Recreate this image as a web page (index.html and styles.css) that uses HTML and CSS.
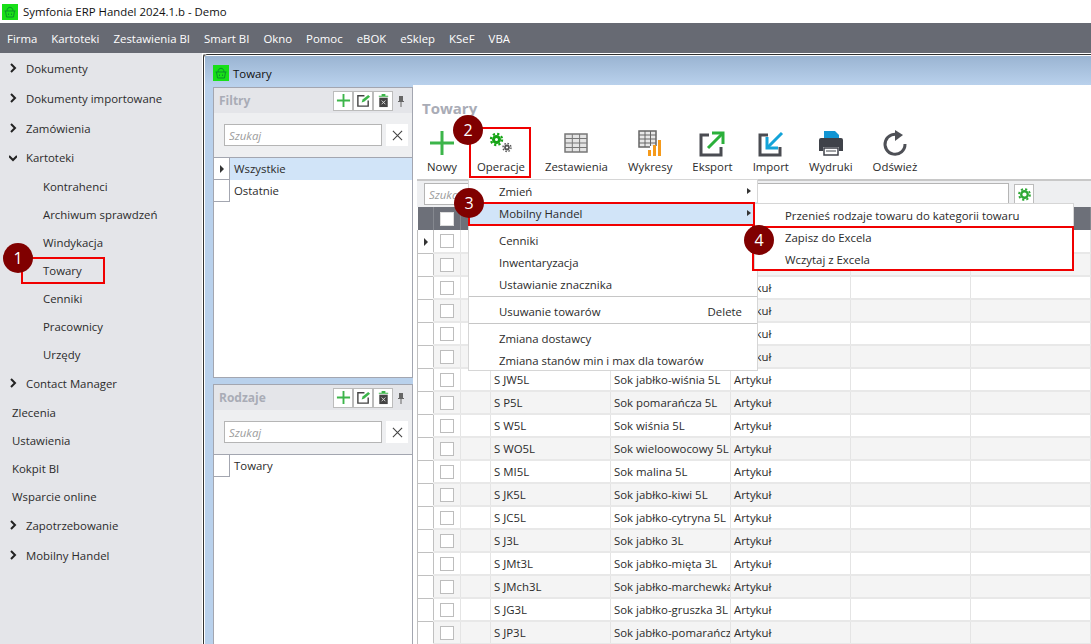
FILE: index.html
```html
<!DOCTYPE html>
<html lang="pl">
<head>
    <meta charset="UTF-8">
    <title>Symfonia ERP Handel 2024.1.b - Demo</title>
    <link rel="stylesheet" href="styles.css">
</head>
<body>

<div class="titlebar">
    <svg class="logo" viewBox="0 0 16 16"><rect width="16" height="16" fill="#18e018"/><path d="M2.500 7h11M3.500 7l1 6h7l1-6M5 7c0-5 6-5 6 0M6.500 9.500v1.500M9.500 9.500v1.500" fill="none" stroke="#0b8f2c" stroke-width="1"/></svg>
    <span>Symfonia ERP Handel 2024.1.b - Demo</span>
</div>

<div class="menubar">
    <span>Firma</span><span>Kartoteki</span><span>Zestawienia BI</span><span>Smart BI</span><span>Okno</span><span>Pomoc</span><span>eBOK</span><span>eSklep</span><span>KSeF</span><span>VBA</span>
</div>

<div class="app">
    <div class="sidebar">
        <div class="nav-item"><svg class="chev" viewBox="0 0 8 10"><path d="M2 1l4 4-4 4" /></svg>Dokumenty</div>
        <div class="nav-item"><svg class="chev" viewBox="0 0 8 10"><path d="M2 1l4 4-4 4" /></svg>Dokumenty importowane</div>
        <div class="nav-item"><svg class="chev" viewBox="0 0 8 10"><path d="M2 1l4 4-4 4" /></svg>Zamówienia</div>
        <div class="nav-item nav-open"><svg class="chev" viewBox="0 0 8 10"><path d="M0 3l4 4 4-4" /></svg>Kartoteki</div>
        <div class="nav-sub">Kontrahenci</div>
        <div class="nav-sub">Archiwum sprawdzeń</div>
        <div class="nav-sub">Windykacja</div>
        <div class="nav-sub">Towary</div>
        <div class="nav-sub">Cenniki</div>
        <div class="nav-sub">Pracownicy</div>
        <div class="nav-sub">Urzędy</div>
        <div class="nav-item"><svg class="chev" viewBox="0 0 8 10"><path d="M2 1l4 4-4 4" /></svg>Contact Manager</div>
        <div class="nav-plain">Zlecenia</div>
        <div class="nav-plain">Ustawienia</div>
        <div class="nav-plain">Kokpit BI</div>
        <div class="nav-plain">Wsparcie online</div>
        <div class="nav-item"><svg class="chev" viewBox="0 0 8 10"><path d="M2 1l4 4-4 4" /></svg>Zapotrzebowanie</div>
        <div class="nav-item"><svg class="chev" viewBox="0 0 8 10"><path d="M2 1l4 4-4 4" /></svg>Mobilny Handel</div>
    </div>

    <div class="workspace">
        <div class="window-title">
            <svg class="logo" viewBox="0 0 16 16"><rect width="16" height="16" fill="#18e018"/><path d="M2.500 7h11M3.500 7l1 6h7l1-6M5 7c0-5 6-5 6 0M6.500 9.500v1.500M9.500 9.500v1.500" fill="none" stroke="#0b8f2c" stroke-width="1"/></svg>
            <span>Towary</span>
        </div>
        <div class="window-body">
            <div class="left-col">
                <div class="panel panel-filters">
                    <div class="panel-head">
                        <span class="panel-name">Filtry</span>
                        <span class="tool"><svg viewBox="0 0 16 16"><path d="M8 1v14M1 8h14" stroke="#3cb54a" stroke-width="2"/></svg></span>
                        <span class="tool"><svg viewBox="0 0 16 16"><path d="M9 3H2v11h11V8" fill="none" stroke="#444" stroke-width="1.500"/><path d="M6 10l1-3 6-5 2 2-6 5z" fill="#3cb54a"/></svg></span>
                        <span class="tool"><svg viewBox="0 0 16 16"><path d="M3 3h10v1H3zM6 1h4v2H6z" fill="#3cb54a"/><path d="M3.500 5h9v10h-9z" fill="#444"/><path d="M6 8l4 4M10 8l-4 4" stroke="#ddd"/></svg></span>
                        <svg class="pin" viewBox="0 0 10 12"><path d="M3 1h4v5h1v1H2V6h1zM4.500 7h1v5h-1z" fill="#666"/></svg>
                    </div>
                    <div class="panel-search">
                        <input class="search" placeholder="Szukaj">
                        <span class="clear"><svg viewBox="0 0 12 12"><path d="M1 1l10 10M11 1L1 11" stroke="#444" stroke-width="1.200"/></svg></span>
                    </div>
                    <div class="list-row selected"><span class="row-mark"><i class="tri"></i></span><span class="list-text">Wszystkie</span></div>
                    <div class="list-row"><span class="row-mark"></span><span class="list-text">Ostatnie</span></div>
                </div>
                <div class="panel panel-kinds">
                    <div class="panel-head">
                        <span class="panel-name">Rodzaje</span>
                        <span class="tool"><svg viewBox="0 0 16 16"><path d="M8 1v14M1 8h14" stroke="#3cb54a" stroke-width="2"/></svg></span>
                        <span class="tool"><svg viewBox="0 0 16 16"><path d="M9 3H2v11h11V8" fill="none" stroke="#444" stroke-width="1.500"/><path d="M6 10l1-3 6-5 2 2-6 5z" fill="#3cb54a"/></svg></span>
                        <span class="tool"><svg viewBox="0 0 16 16"><path d="M3 3h10v1H3zM6 1h4v2H6z" fill="#3cb54a"/><path d="M3.500 5h9v10h-9z" fill="#444"/><path d="M6 8l4 4M10 8l-4 4" stroke="#ddd"/></svg></span>
                        <svg class="pin" viewBox="0 0 10 12"><path d="M3 1h4v5h1v1H2V6h1zM4.500 7h1v5h-1z" fill="#666"/></svg>
                    </div>
                    <div class="panel-search">
                        <input class="search" placeholder="Szukaj">
                        <span class="clear"><svg viewBox="0 0 12 12"><path d="M1 1l10 10M11 1L1 11" stroke="#444" stroke-width="1.200"/></svg></span>
                    </div>
                    <div class="list-row"><span class="row-mark"></span><span class="list-text">Towary</span></div>
                </div>
            </div>

            <div class="main">
                <h2 class="main-title">Towary</h2>
                <div class="toolbar">
                    <div class="tb-btn"><svg viewBox="0 0 28 28"><path d="M14 2v24M2 14h24" stroke="#3cb54a" stroke-width="3"/></svg>Nowy</div>
                    <div class="tb-btn"><svg viewBox="0 0 28 28"><circle cx="9.500" cy="10.500" r="3" fill="none" stroke="#16a516" stroke-width="3"/><circle cx="9.500" cy="10.500" r="5.600" fill="none" stroke="#16a516" stroke-width="2.200" stroke-dasharray="2.200 2.200"/><circle cx="20" cy="18.500" r="2" fill="none" stroke="#555" stroke-width="1.800"/><circle cx="20" cy="18.500" r="4" fill="none" stroke="#555" stroke-width="1.400" stroke-dasharray="1.570 1.570"/></svg>Operacje</div>
                    <div class="tb-btn"><svg viewBox="0 0 28 28"><path d="M3 5h22v18H3z" fill="#e4e4e4" stroke="#777" stroke-width="1.500"/><path d="M3 9.500h22M3 14h22M3 18.500h22M10.300 5v18M17.600 5v18" stroke="#777"/></svg>Zestawienia</div>
                    <div class="tb-btn"><svg viewBox="0 0 28 28"><path d="M3 2h17v16H3z" fill="#e8e8e8" stroke="#666" stroke-width="1.500"/><path d="M3 6h17M3 10h17M3 14h17M9 2v16M14.500 2v16" stroke="#666"/><path d="M14 17h8v11h-8z" fill="#fff"/><path d="M12 21h3v6h-3zM17 16h3v11h-3zM22 11h3v16h-3z" fill="#f59a1b"/></svg>Wykresy</div>
                    <div class="tb-btn"><svg viewBox="0 0 28 28"><path d="M11 6H3v20h20v-8" fill="none" stroke="#4a4c52" stroke-width="3"/><path d="M10 19L24 5" stroke="#2bb03a" stroke-width="3"/><path d="M14 4h11v11" fill="none" stroke="#2bb03a" stroke-width="3"/></svg>Eksport</div>
                    <div class="tb-btn"><svg viewBox="0 0 28 28"><path d="M11 6H3v20h20v-8" fill="none" stroke="#4a4c52" stroke-width="3"/><path d="M25 4L11 18" stroke="#13a3d8" stroke-width="3"/><path d="M10 8v11h11" fill="none" stroke="#13a3d8" stroke-width="3"/></svg>Import</div>
                    <div class="tb-btn"><svg viewBox="0 0 28 28"><path d="M7 2h11l4 4v5H7z" fill="#1295d3"/><path d="M2 11a2 2 0 0 1 2-2h20a2 2 0 0 1 2 2v11h-4v-4H6v4H2z" fill="#3f4249"/><path d="M7 19h14v7H7z" fill="#fff" stroke="#3f4249" stroke-width="1.500"/><path d="M9 22h10" stroke="#3f4249"/></svg>Wydruki</div>
                    <div class="tb-btn"><svg viewBox="0 0 28 28"><path d="M19 6.600A10 10 0 1 0 24 15" fill="none" stroke="#4e5056" stroke-width="3"/><path d="M14 1v11l8-6z" fill="#4e5056"/></svg>Odśwież</div>
                </div>

                <div class="grid-filter">
                    <input class="search grid-search" placeholder="Szukaj">
                    <span class="gear-btn"><svg viewBox="0 0 16 16"><circle cx="8" cy="8" r="3.500" fill="none" stroke="#2ea836" stroke-width="2.500"/><circle cx="8" cy="8" r="5.800" fill="none" stroke="#2ea836" stroke-width="2" stroke-dasharray="2.300 2.250"/></svg></span>
                </div>

                <table class="grid">
                    <colgroup>
                        <col class="c-mark"><col class="c-check"><col class="c-gap"><col class="c-wide"><col class="c-wide"><col class="c-wide"><col class="c-wide"><col>
                    </colgroup>
                    <tr class="grid-head"><th></th><th><span class="check check-head"></span></th><th></th><th></th><th></th><th></th><th></th><th></th></tr>
                    <tr><td class="mark"><i class="tri"></i></td><td><span class="check"></span></td><td></td><td></td><td></td><td></td><td></td><td></td></tr>
                    <tr><td class="mark"></td><td><span class="check"></span></td><td></td><td></td><td></td><td></td><td></td><td></td></tr>
                    <tr><td class="mark"></td><td><span class="check"></span></td><td></td><td></td><td></td><td>Artykuł</td><td></td><td></td></tr>
                    <tr><td class="mark"></td><td><span class="check"></span></td><td></td><td></td><td></td><td>Artykuł</td><td></td><td></td></tr>
                    <tr><td class="mark"></td><td><span class="check"></span></td><td></td><td></td><td></td><td>Artykuł</td><td></td><td></td></tr>
                    <tr><td class="mark"></td><td><span class="check"></span></td><td></td><td></td><td></td><td>Artykuł</td><td></td><td></td></tr>
                    <tr><td class="mark"></td><td><span class="check"></span></td><td></td><td>S JW5L</td><td>Sok jabłko-wiśnia 5L</td><td>Artykuł</td><td></td><td></td></tr>
                    <tr><td class="mark"></td><td><span class="check"></span></td><td></td><td>S P5L</td><td>Sok pomarańcza 5L</td><td>Artykuł</td><td></td><td></td></tr>
                    <tr><td class="mark"></td><td><span class="check"></span></td><td></td><td>S W5L</td><td>Sok wiśnia 5L</td><td>Artykuł</td><td></td><td></td></tr>
                    <tr><td class="mark"></td><td><span class="check"></span></td><td></td><td>S WO5L</td><td>Sok wieloowocowy 5L</td><td>Artykuł</td><td></td><td></td></tr>
                    <tr><td class="mark"></td><td><span class="check"></span></td><td></td><td>S MI5L</td><td>Sok malina 5L</td><td>Artykuł</td><td></td><td></td></tr>
                    <tr><td class="mark"></td><td><span class="check"></span></td><td></td><td>S JK5L</td><td>Sok jabłko-kiwi 5L</td><td>Artykuł</td><td></td><td></td></tr>
                    <tr><td class="mark"></td><td><span class="check"></span></td><td></td><td>S JC5L</td><td>Sok jabłko-cytryna 5L</td><td>Artykuł</td><td></td><td></td></tr>
                    <tr><td class="mark"></td><td><span class="check"></span></td><td></td><td>S J3L</td><td>Sok jabłko 3L</td><td>Artykuł</td><td></td><td></td></tr>
                    <tr><td class="mark"></td><td><span class="check"></span></td><td></td><td>S JMt3L</td><td>Sok jabłko-mięta 3L</td><td>Artykuł</td><td></td><td></td></tr>
                    <tr><td class="mark"></td><td><span class="check"></span></td><td></td><td>S JMch3L</td><td>Sok jabłko-marchewka 3L</td><td>Artykuł</td><td></td><td></td></tr>
                    <tr><td class="mark"></td><td><span class="check"></span></td><td></td><td>S JG3L</td><td>Sok jabłko-gruszka 3L</td><td>Artykuł</td><td></td><td></td></tr>
                    <tr><td class="mark"></td><td><span class="check"></span></td><td></td><td>S JP3L</td><td>Sok jabłko-pomarańcza 3L</td><td>Artykuł</td><td></td><td></td></tr>
                </table>
            </div>
        </div>
    </div>
</div>

<!-- menu Operacje -->
<div class="menu menu-ops">
    <div class="menu-item">Zmień<i class="sub-arrow"></i></div>
    <div class="menu-item active">Mobilny Handel<i class="sub-arrow"></i></div>
    <div class="menu-sep"></div>
    <div class="menu-item">Cenniki</div>
    <div class="menu-item">Inwentaryzacja</div>
    <div class="menu-item">Ustawianie znacznika</div>
    <div class="menu-sep"></div>
    <div class="menu-item">Usuwanie towarów<span class="shortcut">Delete</span></div>
    <div class="menu-sep"></div>
    <div class="menu-item">Zmiana dostawcy</div>
    <div class="menu-item">Zmiana stanów min i max dla towarów</div>
</div>
<div class="menu menu-mobile">
    <div class="menu-item">Przenieś rodzaje towaru do kategorii towaru</div>
    <div class="menu-item">Zapisz do Excela</div>
    <div class="menu-item">Wczytaj z Excela</div>
</div>

<!-- oznaczenia na zrzucie -->
<div class="mark-box box-1"></div>
<div class="mark-box box-2"></div>
<div class="mark-box box-3"></div>
<div class="mark-box box-4"></div>
<div class="badge badge-1">1</div>
<div class="badge badge-2">2</div>
<div class="badge badge-3">3</div>
<div class="badge badge-4">4</div>

</body>
</html>
```
FILE: styles.css
```css
* {
    box-sizing: border-box;
}

html, body {
    height: 100%;
}

body {
    margin: 0;
    position: relative;
    overflow: hidden;
    font-family: "Open Sans", "Noto Sans", sans-serif;
    font-size: 11.4px;
    color: #2b2b2b;
    background-color: #fff;
}

.logo {
    width: 16px;
    height: 16px;
    flex: none;
}

.titlebar {
    height: 23px;
    display: flex;
    align-items: center;
    gap: 5px;
    padding-left: 2px;
    color: #111;
}

.menubar {
    height: 30px;
    display: flex;
    align-items: center;
    gap: 14px;
    padding-left: 7px;
    background-color: #676a73;
    color: #fff;
}

.app {
    display: flex;
    height: 591px;
}

.sidebar {
    width: 203px;
    flex: none;
    background-color: #e4e5e9;
    border-right: 1px solid #fff;
}

.nav-item, .nav-sub, .nav-plain {
    display: flex;
    align-items: center;
}

.nav-item {
    height: 30px;
    padding-left: 9px;
}

.nav-open {
    height: 29px;
}

.nav-sub {
    height: 28px;
    padding-left: 43px;
}

.nav-plain {
    height: 28px;
    padding-left: 12px;
}

.chev {
    width: 8px;
    height: 10px;
    margin-right: 9px;
    fill: none;
    stroke: #222;
    stroke-width: 2;
}

.workspace {
    flex: 1;
    min-width: 0;
    padding-top: 1px;
    border-top: 1px solid #fff;
    border-left: 1px solid #333;
    border-top-left-radius: 4px;
    box-shadow: inset 0 1px 0 #333;
    background-color: #fff;
}

.window-title {
    height: 29px;
    margin-top: 1px;
    margin-left: 1px;
    display: flex;
    align-items: center;
    gap: 4px;
    padding: 5px 0 0 8px;
    background: linear-gradient(#9ab4d2, #b9d1ec);
    color: #111;
}

.window-body {
    display: flex;
    height: 559px;
    margin-left: 1px;
}

.left-col {
    width: 208px;
    flex: none;
    padding: 2px 0 0 8px;
    background-color: #b9d1ec;
}

.panel {
    border: 1px solid #a3a6b0;
    background-color: #fff;
}

.panel-filters {
    height: 291px;
    margin-bottom: 6px;
}

.panel-kinds {
    height: 262px;
}

.panel-head {
    height: 25px;
    display: flex;
    align-items: center;
    padding-left: 5px;
    background-color: #e4e5e9;
}

.panel-name {
    flex: 1;
    font-size: 12px;
    font-weight: bold;
    color: #a9acb6;
}

.tool {
    width: 20px;
    height: 20px;
    display: flex;
    align-items: center;
    justify-content: center;
    border: 1px solid #bcbcbc;
    background-color: #fff;
}

.tool svg {
    width: 15px;
    height: 15px;
}

.pin {
    width: 10px;
    height: 12px;
    margin: 0 6px 0 3px;
}

.panel-search {
    height: 45px;
    display: flex;
    align-items: center;
    gap: 4px;
    padding-left: 10px;
    background-color: #eeeff1;
    border-bottom: 1px solid #a3a6b0;
}

.search {
    width: 158px;
    height: 22px;
    padding: 0 4px;
    border: 1px solid #b5b5b5;
    background-color: #fff;
    font: italic 11.4px "Open Sans", sans-serif;
    outline: none;
}

.search::placeholder {
    color: #9c9c9c;
}

.clear {
    width: 22px;
    height: 22px;
    display: flex;
    align-items: center;
    justify-content: center;
    background-color: #fff;
}

.clear svg {
    width: 11px;
    height: 11px;
}

.list-row {
    height: 22px;
    display: flex;
}

.row-mark {
    width: 16px;
    display: flex;
    align-items: center;
    justify-content: center;
    border-right: 1px solid #a3a6b0;
    border-bottom: 1px solid #a3a6b0;
}

.list-text {
    flex: 1;
    display: flex;
    align-items: center;
    padding: 0 0 2px 4px;
}

.selected .list-text {
    background-color: #d1e4f8;
}

.tri {
    display: inline-block;
    border-left: 4px solid #333;
    border-top: 4px solid transparent;
    border-bottom: 4px solid transparent;
}

.main {
    flex: 1;
    min-width: 0;
    padding-left: 1px;
    background-color: #fff;
}

.main-title {
    height: 20px;
    margin: 13px 0 10px 8px;
    font-size: 15px;
    line-height: 20px;
    color: #a9acb6;
}

.toolbar {
    height: 51px;
    display: flex;
    gap: 20px;
    padding-left: 13px;
}

.tb-btn {
    display: flex;
    flex-direction: column;
    align-items: center;
    gap: 2px;
    padding-top: 1px;
    white-space: nowrap;
}

.tb-btn svg {
    width: 28px;
    height: 28px;
}

.grid-filter {
    height: 28px;
    margin-left: 3px;
    display: flex;
    align-items: center;
    gap: 5px;
    padding-left: 7px;
    background-color: #eeeff1;
    border-top: 2px solid #c8c8c8;
}

.grid-search {
    width: 585px;
}

.gear-btn {
    width: 20px;
    height: 20px;
    display: flex;
    align-items: center;
    justify-content: center;
    border: 1px solid #bcbcbc;
    background-color: #fff;
}

.gear-btn svg {
    width: 15px;
    height: 15px;
}

.grid {
    width: 674px;
    margin-left: 3px;
    table-layout: fixed;
    border-collapse: collapse;
}

.c-mark {
    width: 16px;
}

.c-check {
    width: 27px;
}

.c-gap {
    width: 30px;
}

.c-wide {
    width: 120px;
}

.grid tr {
    height: 23px;
}

.grid td {
    padding: 0 3px;
    border-right: 1px solid #e4e4e4;
    border-bottom: 2px solid #e8e8e8;
    white-space: nowrap;
    overflow: hidden;
}

.grid tr:nth-child(odd) td {
    background-color: #f4f4f4;
}

.grid td.mark, .grid tr:nth-child(odd) td.mark {
    border-left: 1px solid #c0c0c0;
    border-right: 1px solid #c0c0c0;
    border-bottom: 1px solid #c0c0c0;
    background-color: #fff;
    text-align: center;
}

.grid-head th {
    height: 22px;
    padding: 0;
    background-color: #6d7079;
    border-right: 1px solid #85888f;
}

.check {
    display: block;
    width: 14px;
    height: 14px;
    margin-left: 3px;
    border: 1px solid #bdbdbd;
    background-color: #fff;
}

.check-head {
    margin-left: 6px;
    border-color: #ddd;
}

.menu {
    position: absolute;
    background-color: #fff;
    border: 1px solid #d6d6d6;
}

.menu-ops {
    left: 468px;
    top: 179px;
    width: 290px;
    height: 192px;
}

.menu-mobile {
    left: 754px;
    top: 203px;
    width: 320px;
    height: 68px;
}

.menu-item {
    height: 22px;
    display: flex;
    align-items: center;
    padding: 0 15px 0 30px;
    position: relative;
}

.menu-item.active {
    background-color: #d1e4f8;
}

.sub-arrow {
    position: absolute;
    right: 6px;
    top: 8px;
    border-left: 4px solid #333;
    border-top: 3px solid transparent;
    border-bottom: 3px solid transparent;
}

.shortcut {
    margin-left: auto;
}

.menu-sep {
    height: 5px;
    margin-top: 1px;
    margin-bottom: -1px;
    border-top: 1px solid #c6c6c6;
}

.mark-box {
    position: absolute;
    border: 2px solid #f00000;
}

.box-1 {
    left: 21px;
    top: 257px;
    width: 84px;
    height: 27px;
}

.box-2 {
    left: 469px;
    top: 127px;
    width: 62px;
    height: 51px;
}

.box-3 {
    left: 468px;
    top: 202px;
    width: 287px;
    height: 24px;
}

.box-4 {
    left: 752px;
    top: 226px;
    width: 322px;
    height: 45px;
}

.badge {
    position: absolute;
    width: 30px;
    height: 30px;
    border-radius: 50%;
    background-color: #800000;
    color: #fff;
    font-size: 16px;
    line-height: 30px;
    text-align: center;
}

.badge-1 {
    left: 3px;
    top: 243px;
}

.badge-2 {
    left: 453px;
    top: 115px;
}

.badge-3 {
    left: 454px;
    top: 188px;
}

.badge-4 {
    left: 744px;
    top: 225px;
}
```
